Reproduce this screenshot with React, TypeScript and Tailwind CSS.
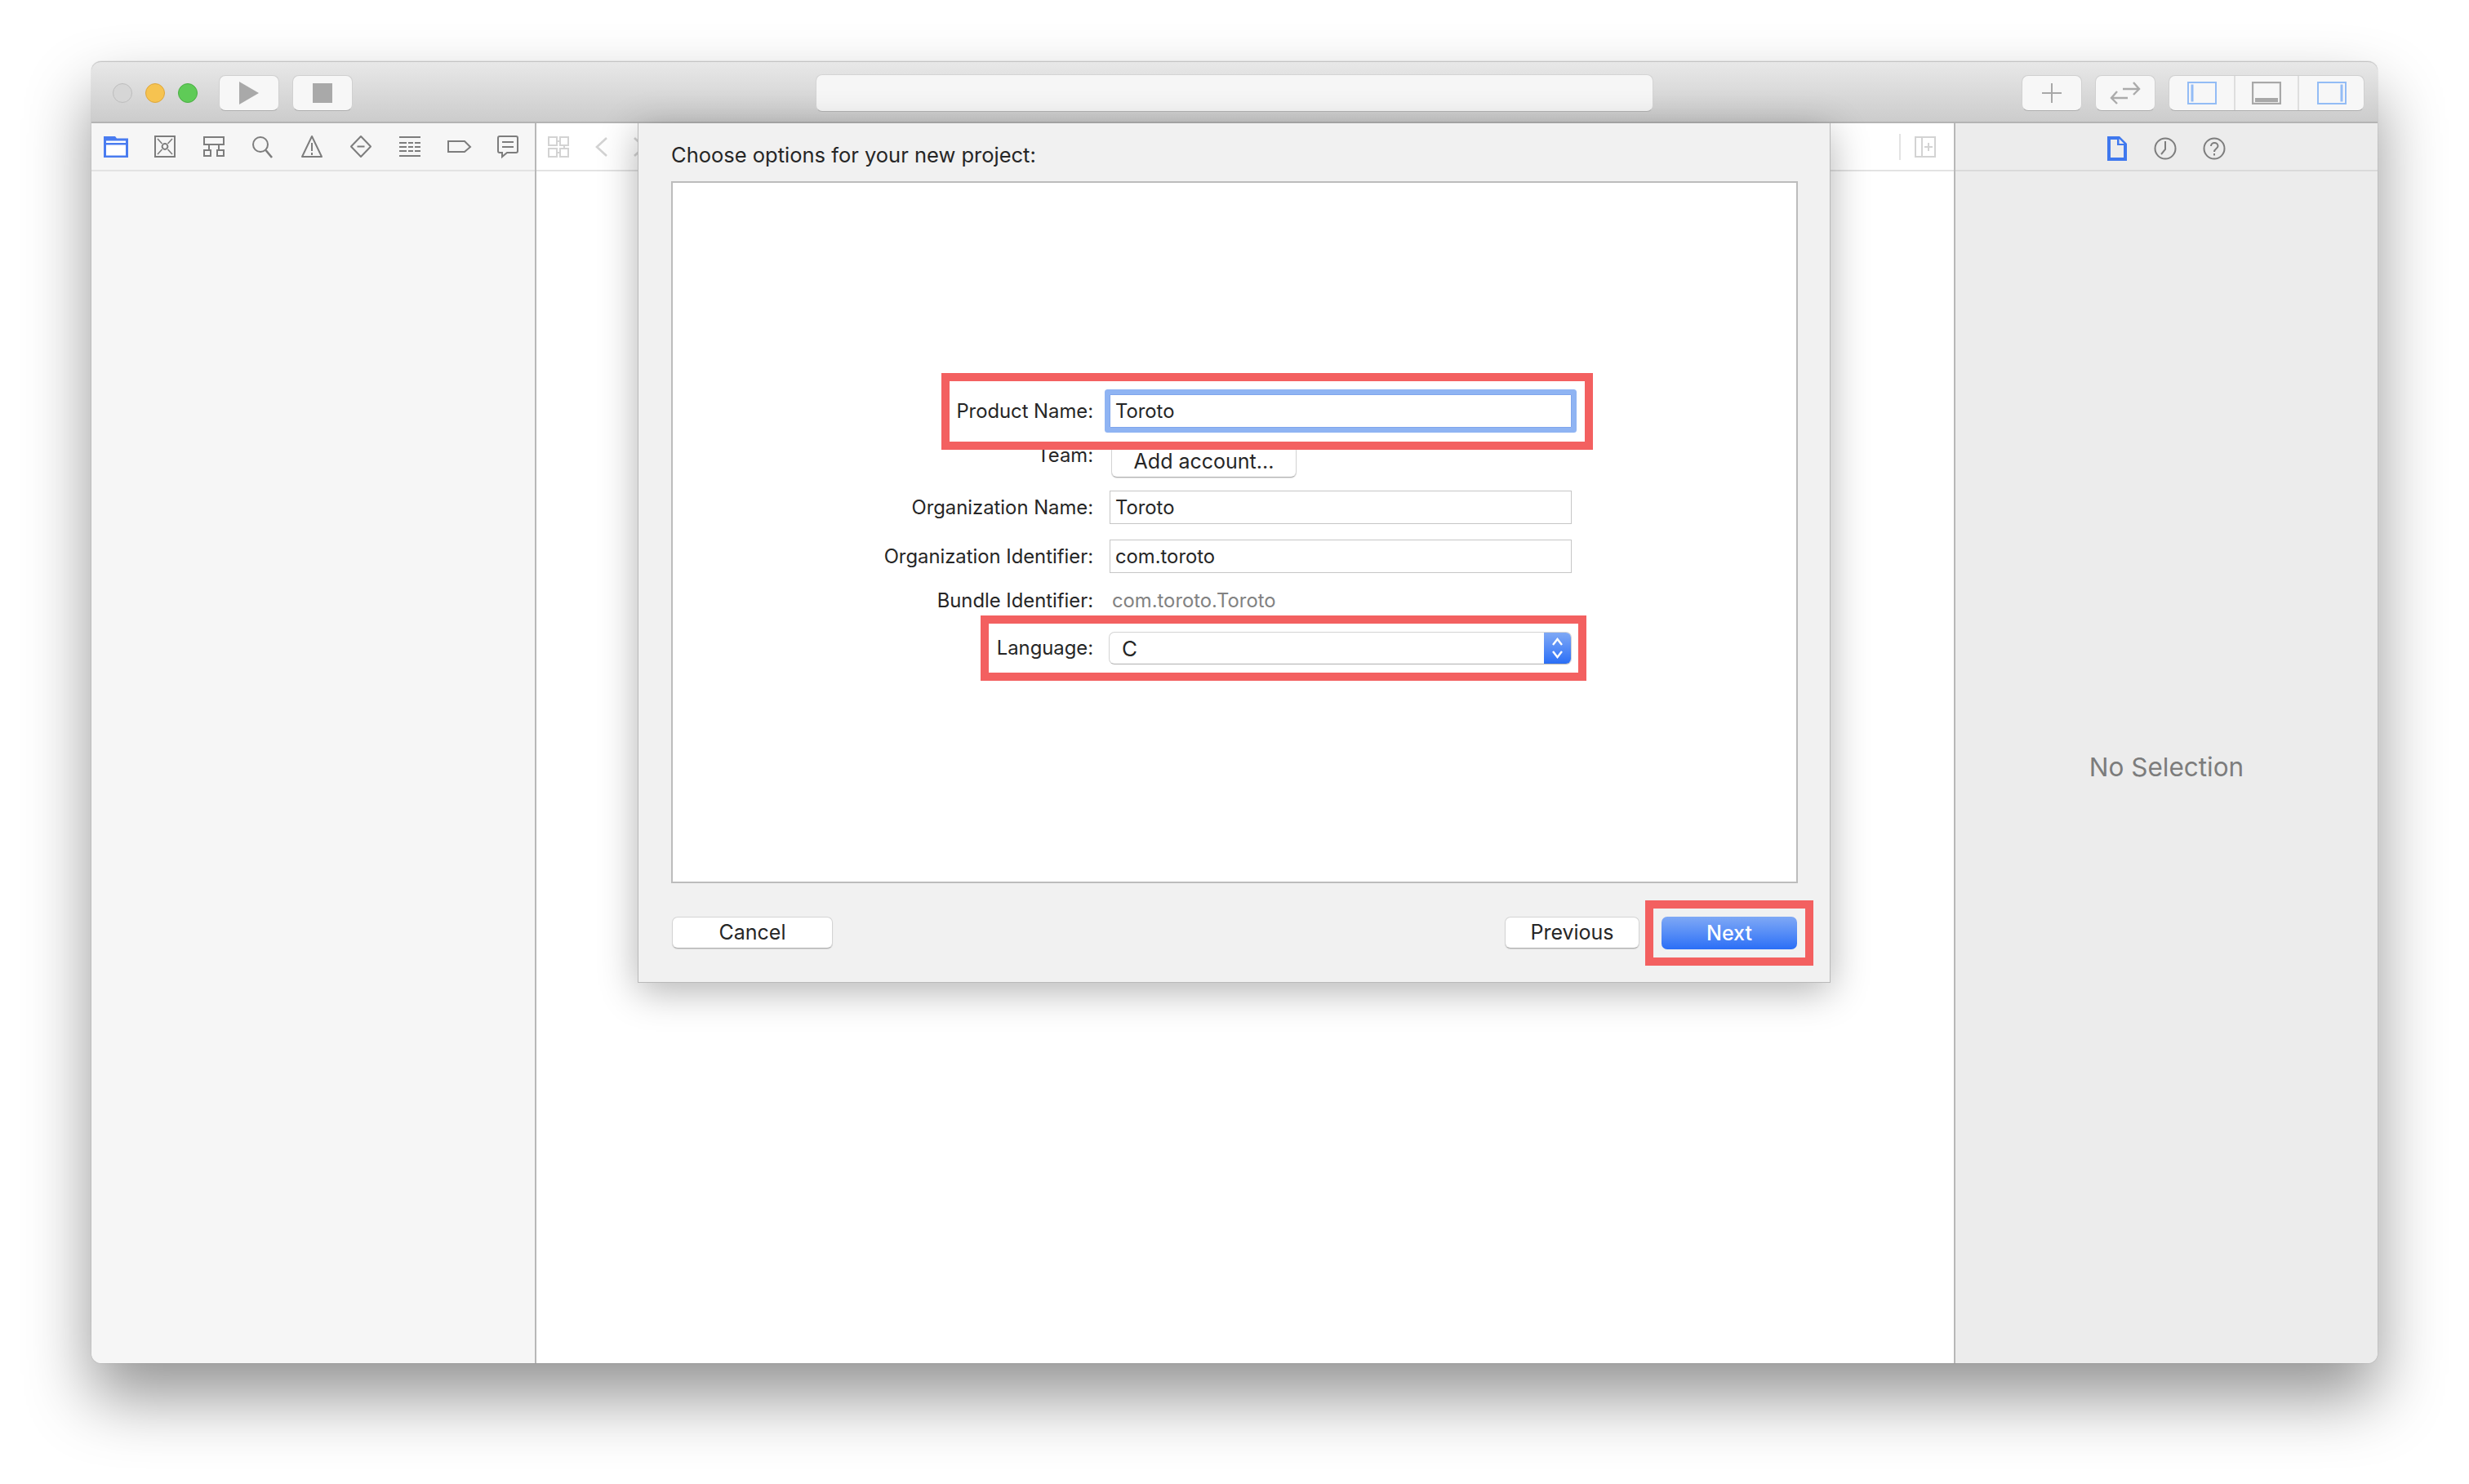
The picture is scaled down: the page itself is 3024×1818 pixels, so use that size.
import React from "react";

const S = "#7d7d7d";
const L = "#d3d3d3";

function I({ children }: { children: React.ReactNode }) {
  return (
    <div className="w-[60px] flex items-center justify-center">
      <svg width="32" height="32" viewBox="0 0 32 32" fill="none" stroke={S} strokeWidth="2">
        {children}
      </svg>
    </div>
  );
}

function Label({ children, cls = "" }: { children: React.ReactNode; cls?: string }) {
  return <div className={`w-[515px] text-right shrink-0 mr-[20px] ${cls}`}>{children}</div>;
}

function Highlight({ cls }: { cls: string }) {
  return <div className={`absolute border-[10px] border-[#f36060] ${cls}`} />;
}

function Btn({ cls, children }: { cls: string; children: React.ReactNode }) {
  return (
    <div className={`h-[44px] rounded-[8px] bg-[#f7f7f7] border border-[#d0d0d0] border-b-[#aeaeae] flex items-center justify-center shrink-0 ${cls}`}>
      {children}
    </div>
  );
}

function DlgBtn({ cls, children }: { cls: string; children: React.ReactNode }) {
  return (
    <div className={`h-[39px] pt-px rounded-[7px] bg-white border border-[#d4d4d4] border-b-[#b0b0b0] shadow-[0_1px_1px_rgba(0,0,0,0.12)] flex items-center justify-center text-[#262626] shrink-0 ${cls}`}>
      {children}
    </div>
  );
}

export default function App() {
  return (
    <div className="w-[3024px] h-[1818px] bg-white pt-[75px] pl-[112px] overflow-hidden font-['Inter',sans-serif] text-[23.8px] text-[#262626]">
      <div className="w-[2800px] h-[1595px] flex flex-col rounded-[12px] shadow-[0_42px_80px_rgba(0,0,0,0.42),0_0_1px_rgba(0,0,0,0.5)]">
        {/* Title bar */}
        <div className="h-[76px] shrink-0 flex items-center pt-[3px] pr-[16px] pl-[26px] rounded-t-[12px] bg-gradient-to-b from-[#e8e8e8] to-[#cccccc] border-t border-t-[#c4c4c4] border-b-2 border-b-[#b4b4b4]">
          <div className="w-[24px] h-[24px] rounded-full bg-[#d6d6d6] border border-[#bdbdbd]" />
          <div className="w-[24px] h-[24px] rounded-full bg-[#f6c350] border border-[#dea63a] ml-[16px]" />
          <div className="w-[24px] h-[24px] rounded-full bg-[#5fcb57] border border-[#4aae43] ml-[16px]" />
          <Btn cls="w-[74px] ml-[26px]">
            <svg width="24" height="28" viewBox="0 0 24 28"><path d="M0 0L24 14L0 28Z" fill="#a9a9a9" /></svg>
          </Btn>
          <Btn cls="w-[74px] ml-[16px]">
            <div className="w-[24px] h-[24px] bg-[#a9a9a9]" />
          </Btn>
          <div className="w-[1026px] h-[46px] ml-[567px] rounded-[8px] bg-[#f6f6f6] border border-[#d4d4d4] border-b-[#b4b4b4]" />
          <Btn cls="w-[74px] ml-auto">
            <svg width="24" height="24" viewBox="0 0 24 24" stroke="#a8a8a8" strokeWidth="2"><path d="M12 0V24M0 12H24" /></svg>
          </Btn>
          <Btn cls="w-[74px] ml-[16px]">
            <svg width="38" height="28" viewBox="0 0 38 28" fill="none" stroke="#ababab" strokeWidth="2.4"><path d="M16 9H36M29 1L36 9L29 16M22 20H2M9 12L2 20L9 27" /></svg>
          </Btn>
          <div className="w-[240px] h-[44px] ml-[16px] rounded-[8px] bg-[#f7f7f7] border border-[#d0d0d0] border-b-[#aeaeae] flex shrink-0">
            <div className="w-[81px] flex items-center justify-center border-r-2 border-r-[#dedede]">
              <svg width="36" height="28" viewBox="0 0 36 28" fill="none" stroke="#93bcf5" strokeWidth="2"><rect x="1" y="1" width="34" height="26" /><rect x="5" y="4" width="2" height="20" fill="#93bcf5" strokeWidth="1" /></svg>
            </div>
            <div className="w-[78px] flex items-center justify-center border-r-2 border-r-[#dedede]">
              <svg width="36" height="28" viewBox="0 0 36 28" fill="none" stroke="#a8a8a8" strokeWidth="2.4"><rect x="1" y="1" width="34" height="26" /><rect x="4" y="20" width="28" height="5" fill="#a8a8a8" stroke="none" /></svg>
            </div>
            <div className="flex-1 flex items-center justify-center">
              <svg width="36" height="28" viewBox="0 0 36 28" fill="none" stroke="#93bcf5" strokeWidth="2"><rect x="1" y="1" width="34" height="26" /><rect x="29" y="4" width="2" height="20" fill="#93bcf5" strokeWidth="1" /></svg>
            </div>
          </div>
        </div>

        {/* Body */}
        <div className="flex-1 flex relative min-h-0">
          {/* Navigator */}
          <div className="w-[545px] shrink-0 bg-[#f6f6f6] border-r-2 border-r-[#b8b8b8] rounded-bl-[12px]">
            <div className="h-[59px] flex border-b-2 border-b-[#e3e3e3]">
              <div className="w-[60px] flex items-center justify-center">
                <svg width="30" height="26" viewBox="0 0 30 26">
                  <path d="M0 0H14L16 2.5H30V26H0Z" fill="#4a7cf0" />
                  <rect x="3" y="5.5" width="24" height="2.5" fill="#fff" />
                  <rect x="3" y="10.5" width="24" height="13" fill="#fff" />
                </svg>
              </div>
              <I>
                <rect x="4" y="3" width="24" height="25" />
                <circle cx="16" cy="15.5" r="3.4" />
                <path d="M7 6L12.5 12M25 6L19.5 12M7 25L12.5 19M25 25L19.5 19" strokeWidth="1.6" />
              </I>
              <I>
                <rect x="4" y="4" width="24" height="9" />
                <path d="M10 13V20M22 13V20" />
                <rect x="4" y="20" width="8" height="7" />
                <rect x="20" y="20" width="8" height="7" />
              </I>
              <I>
                <circle cx="13" cy="13" r="9" />
                <path d="M19.5 20L27 29" strokeWidth="2.6" />
              </I>
              <I>
                <path d="M16 3L28 28H4Z" strokeLinejoin="round" />
                <path d="M16 11V21M16 23V26" />
              </I>
              <I>
                <path d="M16 3L28 15.5L16 28L4 15.5Z" strokeLinejoin="round" />
                <path d="M11.5 15.5H20.5" />
              </I>
              <I>
                <path d="M3 4H29M3 11H12M14 11H20M22 11H29M3 16H12M14 16H20M22 16H29M3 21H12M14 21H20M22 21H29M3 27H29" />
              </I>
              <I>
                <path d="M3 9H23L30 16L23 22H3Z" />
              </I>
              <I>
                <path d="M6 3H26A2 2 0 0 1 28 5V21A2 2 0 0 1 26 23H15L9 28V23H6A2 2 0 0 1 4 21V5A2 2 0 0 1 6 3Z" />
                <path d="M9 10H23M9 16H23" />
              </I>
            </div>
          </div>

          {/* Editor */}
          <div className="flex-1 bg-white min-w-0">
            <div className="h-[59px] flex items-center border-b-2 border-b-[#e3e3e3] pl-[14px] pr-[22px]">
              <svg width="26" height="26" viewBox="0 0 26 26" fill="none" stroke={L} strokeWidth="2">
                <rect x="1" y="1" width="10" height="10" /><rect x="15" y="1" width="10" height="10" /><rect x="1" y="15" width="10" height="10" /><rect x="15" y="15" width="10" height="10" /><path d="M11 6H15M11 20H15M20 11V15" />
              </svg>
              <svg className="ml-[32px]" width="15" height="24" viewBox="0 0 15 24" fill="none" stroke={L} strokeWidth="2.6"><path d="M14 1L2 12L14 23" /></svg>
              <svg className="ml-[32px]" width="15" height="24" viewBox="0 0 15 24" fill="none" stroke={L} strokeWidth="2.6"><path d="M1 1L13 12L1 23" /></svg>
              <div className="ml-auto w-[2px] h-[32px] bg-[#e3e3e3]" />
              <svg className="ml-[17px]" width="26" height="26" viewBox="0 0 26 26" fill="none" stroke={L} strokeWidth="2">
                <rect x="1" y="1" width="24" height="24" /><path d="M9 1V25M17 8V18M12 13H22" />
              </svg>
            </div>
          </div>

          {/* Inspector */}
          <div className="w-[519px] shrink-0 bg-[#ececec] border-l-2 border-l-[#b8b8b8] rounded-br-[12px] flex flex-col">
            <div className="h-[59px] shrink-0 flex items-center border-b-2 border-b-[#dadada] pl-[186px] pt-[4px]">
              <svg width="24" height="30" viewBox="0 0 24 30">
                <path d="M0 0H15L24 9V30H0Z" fill="#3f78ee" />
                <path d="M4 4H12V11H20V26H4Z" fill="#ececec" />
                <path d="M14.5 3L20.5 9H14.5Z" fill="#ececec" />
              </svg>
              <svg className="ml-[33px]" width="28" height="28" viewBox="0 0 28 28" fill="none" stroke={S} strokeWidth="2">
                <circle cx="14" cy="14" r="12.5" /><path d="M14 5V15L9 21" />
              </svg>
              <svg className="ml-[32px]" width="28" height="28" viewBox="0 0 28 28" fill="none" stroke={S} strokeWidth="2">
                <circle cx="14" cy="14" r="12.5" /><path d="M10 11C10 5.5 18.5 5.5 18.5 11C18.5 14 14 14 14 18M14 20V22.5" />
              </svg>
            </div>
            <div className="flex-1 flex items-center justify-center text-[31.5px] text-[#7c7c7c]">No Selection</div>
          </div>

          {/* Sheet */}
          <div className="absolute left-[669px] top-0 w-[1461px] h-[1053px] bg-[#f1f1f1] border-x border-b border-[#b9b9b9] shadow-[0_10px_44px_rgba(0,0,0,0.3)] pl-[40px] pr-[39px] flex flex-col">
            <div className="h-[71px] shrink-0 flex items-center pt-[7px] text-[25.5px]">Choose options for your new project:</div>
            <div className="h-[860px] shrink-0 bg-white border-2 border-[#bcbcbc] pt-[259px] flex flex-col">
              <div className="flex items-center h-[41px]">
                <Label>Product Name:</Label>
                <div className="w-[566px] h-[41px] bg-white border border-[#7fa5ec] shadow-[0_0_0_6px_#8fb4f3] rounded-[1px] flex items-center pl-[6px]">Toroto</div>
              </div>
              <div className="flex items-start h-[40px] mt-[21px]">
                <Label cls="h-[26px] leading-[26px]">Team:</Label>
                <DlgBtn cls="w-[227px] h-[40px] ml-[2px] text-[25px]">Add account...</DlgBtn>
              </div>
              <div className="flex items-center h-[41px] mt-[16px]">
                <Label>Organization Name:</Label>
                <div className="w-[566px] h-[41px] bg-white border border-[#c6c6c6] flex items-center pl-[6px]">Toroto</div>
              </div>
              <div className="flex items-center h-[41px] mt-[19px]">
                <Label>Organization Identifier:</Label>
                <div className="w-[566px] h-[41px] bg-white border border-[#c6c6c6] flex items-center pl-[6px]">com.toroto</div>
              </div>
              <div className="flex items-center h-[30px] mt-[19px]">
                <Label>Bundle Identifier:</Label>
                <div className="pl-[3px] text-[#828282]">com.toroto.Toroto</div>
              </div>
              <div className="flex items-center h-[40px] mt-[23px]">
                <Label>Language:</Label>
                <div className="w-[567px] h-[40px] -ml-px bg-white rounded-[7px] border border-[#d4d4d4] border-b-[#b0b0b0] flex items-center pl-[15px] relative overflow-hidden text-[26px]">
                  C
                  <div className="absolute right-0 top-0 w-[33px] h-full bg-gradient-to-b from-[#7fa8f5] to-[#2a6ef6] flex items-center justify-center">
                    <svg width="15" height="28" viewBox="0 0 15 28" fill="none" stroke="#fff" strokeWidth="2.4"><path d="M2 10L7.5 3L13 10M2 18L7.5 25L13 18" /></svg>
                  </div>
                </div>
              </div>
            </div>
            <div className="mt-[41px] flex items-start text-[25px]">
              <DlgBtn cls="w-[197px] ml-px">Cancel</DlgBtn>
              <DlgBtn cls="w-[165px] ml-auto">Previous</DlgBtn>
              <div className="w-[166px] h-[40px] pt-px ml-[27px] mr-px rounded-[7px] bg-gradient-to-b from-[#7fa8f5] to-[#2a6ef6] flex items-center justify-center text-white shrink-0 font-medium">Next</div>
            </div>
            <Highlight cls="left-[371px] top-[306px] w-[798px] h-[94px]" />
            <Highlight cls="left-[419px] top-[603px] w-[742px] h-[80px]" />
            <Highlight cls="left-[1233px] top-[952px] w-[206px] h-[80px]" />
          </div>
        </div>
      </div>
    </div>
  );
}
